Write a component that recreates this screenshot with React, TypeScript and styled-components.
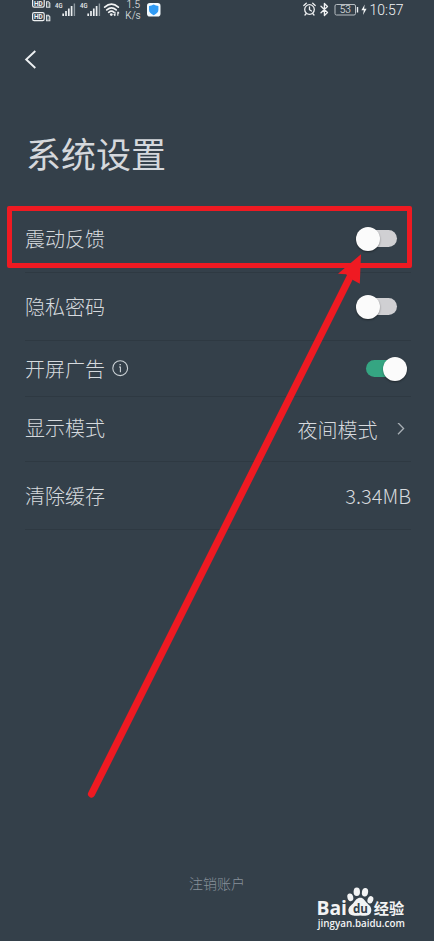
import React from "react";
import styled, { createGlobalStyle } from "styled-components";

const BG = "#34404a";
const RED = "#ef1a22";

const GlobalStyle = createGlobalStyle`
  body { margin: 0; background: ${BG}; }
  * { box-sizing: border-box; }
`;

const Screen = styled.main`
  position: relative;
  display: flex;
  flex-direction: column;
  width: 434px;
  height: 941px;
  overflow: hidden;
  background: ${BG};
  color: #d6dade;
  font-family: "Noto Sans CJK SC", sans-serif;
  font-weight: 300;
`;

const StatusBar = styled.header`
  display: flex;
  justify-content: space-between;
  height: 24px;
  padding: 0 30px 0 32px;
  flex: none;
`;

const StatusIcons = styled.svg`
  display: block;
  height: 24px;
  flex: none;
`;

const Nav = styled.nav`
  flex: none;
  height: 72px;
  padding: 26px 0 0 24px;
`;

const Title = styled.h1`
  flex: none;
  height: 109px;
  margin: 0;
  padding: 32px 0 0 26px;
  font-size: 35px;
  line-height: 50px;
  font-weight: 400;
  color: #d5d8dc;
`;

const List = styled.section`
  display: flex;
  flex-direction: column;
  margin: 0 23px 0 25px;
`;

const Row = styled.div<{ $height: number; $right?: number }>`
  display: flex;
  align-items: center;
  justify-content: space-between;
  height: ${(p) => p.$height}px;
  padding-right: ${(p) => p.$right ?? 0}px;
  border-bottom: 1px solid #2e3942;
  font-size: 20px;
  line-height: 30px;
`;

const Label = styled.span<{ $shift?: number }>`
  display: flex;
  align-items: center;
  gap: 7px;
  margin-top: ${(p) => p.$shift ?? 0}px;
`;

const Value = styled.span<{ $gap?: number; $shift?: number }>`
  display: flex;
  align-items: center;
  gap: ${(p) => p.$gap ?? 0}px;
  margin-top: ${(p) => p.$shift ?? 0}px;
`;

const Track = styled.span<{ $on?: boolean }>`
  display: flex;
  align-items: center;
  justify-content: ${(p) => (p.$on ? "flex-end" : "flex-start")};
  width: 37px;
  height: 17px;
  border-radius: 9px;
  background: ${(p) => (p.$on ? "#35a582" : "#d0d0d3")};
`;

const Knob = styled.span<{ $on?: boolean }>`
  flex: none;
  width: 24px;
  height: 24px;
  margin: ${(p) => (p.$on ? "0 -4px 0 0" : "0 0 0 -4px")};
  border-radius: 50%;
  background: #fbfbfb;
  box-shadow: 0 1px 2px rgba(0, 0, 0, 0.4);
`;

const Footer = styled.footer`
  margin-top: auto;
  height: 69px;
  font-size: 14px;
  line-height: 22px;
  text-align: center;
  color: #87919a;
`;

const Highlight = styled.div`
  position: absolute;
  left: 7px;
  top: 206px;
  width: 405px;
  height: 62px;
  border: 5px solid ${RED};
  border-radius: 2px;
`;

const Overlay = styled.svg`
  position: absolute;
  left: 0;
  top: 0;
`;

const Watermark = styled.svg`
  position: absolute;
  left: 314px;
  top: 882px;
`;

const Switch = ({ on }: { on?: boolean }) => (
  <Track $on={on}>
    <Knob $on={on} />
  </Track>
);

const Signal = ({ x }: { x: number }) => (
  <g transform={`translate(${x} 0)`}>
    <text x="0" y="8.3" fontSize="7.4" fontWeight="500" fill="#e9edef" textLength="7.5" lengthAdjust="spacingAndGlyphs">4G</text>
    <path d="M8.2 16v-2.5M11 16v-5M13.8 16V8.5M16.6 16V6" stroke="#eceff1" strokeWidth="1.7" />
    <path d="M19.4 16V3.5" stroke="#8d979e" strokeWidth="1.4" />
  </g>
);

const HdBadge = ({ y, sim }: { y: number; sim: string }) => (
  <g transform={`translate(0 ${y})`}>
    <rect x="0.6" y="0.6" width="11.6" height="8" rx="1.6" fill="none" stroke="#eef1f2" strokeWidth="1.2" />
    <text x="2" y="7.4" fontSize="7.8" fontWeight="700" fill="#f4f6f7" textLength="8.8" lengthAdjust="spacingAndGlyphs">HD</text>
    <path d="M14.6 3.2h1.9l1.3 1.4v4.2h-3.2z" fill="none" stroke="#e2e6e9" strokeWidth="1.1" />
    <text x="15.1" y="8" fontSize="4.5" fill="#e4e8ea">{sim}</text>
  </g>
);

const StatusLeft = () => (
  <StatusIcons width="132" viewBox="0 0 132 24" fontFamily="Roboto, sans-serif">
    <HdBadge y={-1.5} sim="1" />
    <HdBadge y={12} sim="2" />
    <Signal x={23} />
    <Signal x={48} />
    <g fill="none" stroke="#f2f4f5" strokeWidth="1.7" strokeLinecap="round">
      <path d="M72.7 7.2Q79.5 1 86.3 7.2M74.8 9.9Q79.5 5.7 84.2 9.9M76.7 12.3Q79.5 10.1 82 12.3" />
    </g>
    <circle cx="79.3" cy="14.6" r="1.4" fill="#eef0f2" />
    <path d="M83 11.7v4M81.8 14.2 83 15.8M85.8 15.8v-4M85.8 11.8 87 13.4" stroke="#eef0f2" strokeWidth="1.1" />
    <g fill="#f2f4f5" fontSize="10" textAnchor="middle">
      <text x="101.2" y="8">1.5</text>
      <text x="101" y="19">K/s</text>
    </g>
    <rect x="115" y="3" width="13.5" height="13.5" rx="2.8" fill="#f4fbff" />
    <path d="M121.7 4.6q2.2 1.4 4.7 1.4v3.8q0 3.5-4.7 5.4-4.7-1.9-4.7-5.4V6q2.5 0 4.7-1.4z" fill="#2f9bf5" />
  </StatusIcons>
);

const StatusRight = () => (
  <StatusIcons width="102" viewBox="0 0 102 24" fontFamily="Roboto, sans-serif">
    <g fill="none" stroke="#eef0f2" strokeWidth="1.3" strokeLinecap="round" strokeLinejoin="round">
      <circle cx="7.5" cy="9.5" r="4.8" />
      <path d="M7.5 7v2.8l2 1.2M1.8 5.6 4.3 3.3M13.2 5.6 10.7 3.3M4.3 13.5 3 15M10.7 13.5 12 15" />
      <path d="M19 6.2 25.5 12.5 22.4 15.5V3.5l3.1 3-6.5 6.3" />
    </g>
    <rect x="33" y="4.5" width="20.5" height="10.5" rx="1.5" fill="none" stroke="#b7bec3" strokeWidth="1" />
    <path d="M55.5 7v5.5" stroke="#eef0f2" strokeWidth="1.4" />
    <text x="43.2" y="13.3" fontSize="10" textAnchor="middle" fill="#f2f4f5">53</text>
    <path d="M62.7 4.4 59.4 10.3h2.4l-.8 4.7 3.6-6.2h-2.5z" fill="#f2f4f5" />
    <text x="67.5" y="14.8" fontSize="14.5" fill="#f2f4f5" textLength="34" lengthAdjust="spacingAndGlyphs">10:57</text>
  </StatusIcons>
);

const BackIcon = () => (
  <svg width="14" height="20" viewBox="0 0 14 20">
    <path d="M11.3 1 2.2 9.5 11.3 18" fill="none" stroke="#edf0f2" strokeWidth="1.9" />
  </svg>
);

const InfoIcon = () => (
  <svg width="17" height="17" viewBox="0 0 17 17" fill="none" stroke="#cbd1d5">
    <circle cx="8.2" cy="8.2" r="7.4" strokeWidth="1.1" />
    <path d="M7 7h1.4v5.2" strokeWidth="1.1" />
    <path d="M7.5 4.6h1.4" strokeWidth="1.2" />
  </svg>
);

const Chevron = () => (
  <svg width="8" height="14" viewBox="0 0 8 14">
    <path d="M1 -0.2 6.6 5.5 1 11.2" fill="none" stroke="#a9b0b6" strokeWidth="1.3" />
  </svg>
);

const BrandMark = () => (
  <Watermark width="96" height="54" viewBox="314 882 96 54" fill="#f2f3f4">
    <text x="316.5" y="914.5" fontFamily="Open Sans, sans-serif" fontSize="19.5" fontWeight="700" textLength="30.5" lengthAdjust="spacingAndGlyphs">Bai</text>
    <ellipse cx="350.3" cy="897.3" rx="2.9" ry="3.9" transform="rotate(-15 350.3 897.3)" />
    <ellipse cx="356.8" cy="891.8" rx="3.2" ry="4.3" />
    <ellipse cx="365" cy="892.3" rx="3.1" ry="4.3" transform="rotate(10 365 892.3)" />
    <ellipse cx="370.4" cy="899.8" rx="2.8" ry="3.8" transform="rotate(20 370.4 899.8)" />
    <path d="M360.3 897.8c3.2 0 4.4 2.8 6.4 5 2.2 2.3 5 4 4.6 8-.6 5.2-5.2 5.3-11 4.8-5.8.5-11.4.5-11.9-4.6-.4-4.1 3-5.8 5.2-8.3 2-2.3 3.3-4.9 6.7-4.9z" />
    <text x="352.9" y="912.7" fill={BG} fontFamily="Open Sans, sans-serif" fontSize="13" fontWeight="700" textLength="15" lengthAdjust="spacingAndGlyphs">du</text>
    <text x="373.8" y="913.7" fontFamily="Noto Sans CJK SC, sans-serif" fontSize="15.2" fontWeight="700">经验</text>
    <text x="317.8" y="926.5" fontFamily="Open Sans, sans-serif" fontSize="10" fontWeight="600" textLength="87" lengthAdjust="spacingAndGlyphs">jingyan.baidu.com</text>
  </Watermark>
);

export default function App() {
  return (
    <>
      <GlobalStyle />
      <Screen>
        <StatusBar>
          <StatusLeft />
          <StatusRight />
        </StatusBar>
        <Nav>
          <BackIcon />
        </Nav>
        <Title>系统设置</Title>
        <List>
          <Row $height={68} $right={14}>
            <Label>震动反馈</Label>
            <Switch />
          </Row>
          <Row $height={68} $right={14}>
            <Label>隐私密码</Label>
            <Switch />
          </Row>
          <Row $height={56} $right={8.4}>
            <Label>
              开屏广告
              <InfoIcon />
            </Label>
            <Switch on />
          </Row>
          <Row $height={65} $right={6}>
            <Label $shift={-3}>显示模式</Label>
            <Value $gap={19.5} $shift={2}>
              夜间模式
              <Chevron />
            </Value>
          </Row>
          <Row $height={68}>
            <Label>清除缓存</Label>
            <Value>3.34MB</Value>
          </Row>
        </List>
        <Footer>注销账户</Footer>
        <Highlight />
        <Overlay width="434" height="941" viewBox="0 0 434 941">
          <path d="M91.5 794 351 275" stroke={RED} strokeWidth="7.2" strokeLinecap="round" />
          <path d="M361 254.3 338 273.7 346 274.3 353 280 359.8 283.8z" fill={RED} />
        </Overlay>
        <BrandMark />
      </Screen>
    </>
  );
}
